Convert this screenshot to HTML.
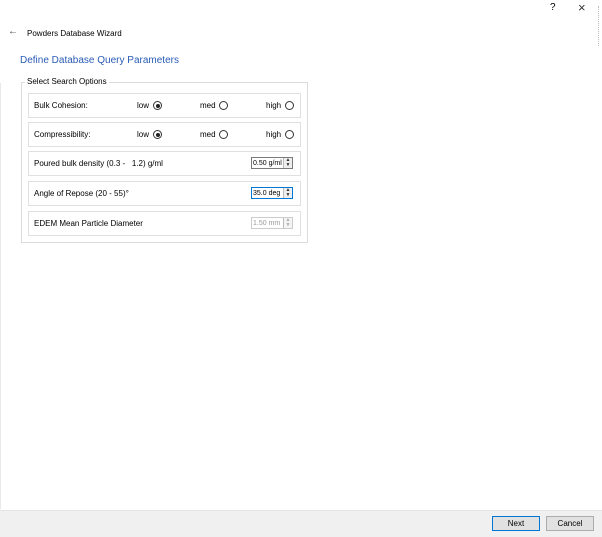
<!DOCTYPE html><html><head><style>
body{margin:0;width:602px;height:536px;background:#fff;font-family:"Liberation Sans",sans-serif;font-size:8px;color:#000;position:relative;overflow:hidden}
.a{position:absolute;white-space:nowrap}
.row{position:absolute;left:28px;width:271px;height:23px;border:1px solid #e0e0e0;background:#fff}
.row .a{top:7px}
.rad{position:absolute;width:7px;height:7px;border:1px solid #333;border-radius:50%;top:7px}
.rad.on::after{content:"";position:absolute;left:1.5px;top:1.5px;width:4px;height:4px;border-radius:50%;background:#222}
.spin{position:absolute;left:222px;top:5px;width:42px;height:12px;border:1px solid #7a7a7a;font-size:7px;line-height:11px;padding-left:1px;box-sizing:border-box;overflow:hidden;padding-right:9px}
.spin .ar{position:absolute;right:0;top:0;width:8px;height:10px;border-left:1px solid #bbb;background:#eee;font-size:5px;line-height:5px;text-align:center;color:#333}
.btn{position:absolute;top:516px;height:13px;border:1px solid #adadad;background:#e1e1e1;font-size:8px;line-height:13px;text-align:center}
</style></head><body>
<div class="a" style="left:550px;top:2px;font-size:10px">?</div>
<div class="a" style="left:578px;top:0px;font-size:13px;color:#333">×</div>
<div class="a" style="left:598px;top:6px;width:1px;height:40px;border-left:1px dotted #bbb"></div>
<div class="a" style="left:0;top:83px;width:1px;height:426px;background:#e8e8e8"></div>
<div class="a" style="left:8px;top:26px;font-size:10px;color:#444">←</div>
<div class="a" style="left:27px;top:29px;font-size:8px">Powders Database Wizard</div>
<div class="a" style="left:20px;top:55px;font-size:10px;color:#2a5bb5">Define Database Query Parameters</div>
<div class="a" style="left:21px;top:82px;width:285px;height:159px;border:1px solid #dcdcdc"></div>
<div class="a" style="left:25px;top:77px;background:#fff;padding:0 2px;font-size:8px">Select Search Options</div>
<div class="row" style="top:93px"><div class="a" style="left:5px">Bulk Cohesion:</div><div class="a" style="left:108px">low</div><div class="rad on" style="left:124px"></div><div class="a" style="left:171px">med</div><div class="rad" style="left:190px"></div><div class="a" style="left:237px">high</div><div class="rad" style="left:256px"></div></div>
<div class="row" style="top:122px"><div class="a" style="left:5px">Compressibility:</div><div class="a" style="left:108px">low</div><div class="rad on" style="left:124px"></div><div class="a" style="left:171px">med</div><div class="rad" style="left:190px"></div><div class="a" style="left:237px">high</div><div class="rad" style="left:256px"></div></div>
<div class="row" style="top:151px"><div class="a" style="left:5px">Poured bulk density (0.3 -&nbsp;&nbsp; 1.2) g/ml</div><div class="spin">0.50 g/ml<div class="ar">▲<br>▼</div></div></div>
<div class="row" style="top:181px"><div class="a" style="left:5px">Angle of Repose (20 - 55)°</div><div class="spin" style="border-color:#0078d7">35.0 deg<div class="ar">▲<br>▼</div></div></div>
<div class="row" style="top:211px"><div class="a" style="left:5px">EDEM Mean Particle Diameter</div><div class="spin" style="border-color:#ccc;color:#999">1.50 mm<div class="ar" style="background:#f4f4f4;color:#aaa">▲<br>▼</div></div></div>
<div class="a" style="left:0;top:510px;width:602px;height:26px;background:#f0f0f0;border-top:1px solid #e4e4e4"></div>
<div class="btn" style="left:492px;width:46px;border-color:#0078d7">Next</div>
<div class="btn" style="left:546px;width:46px">Cancel</div>
</body></html>
